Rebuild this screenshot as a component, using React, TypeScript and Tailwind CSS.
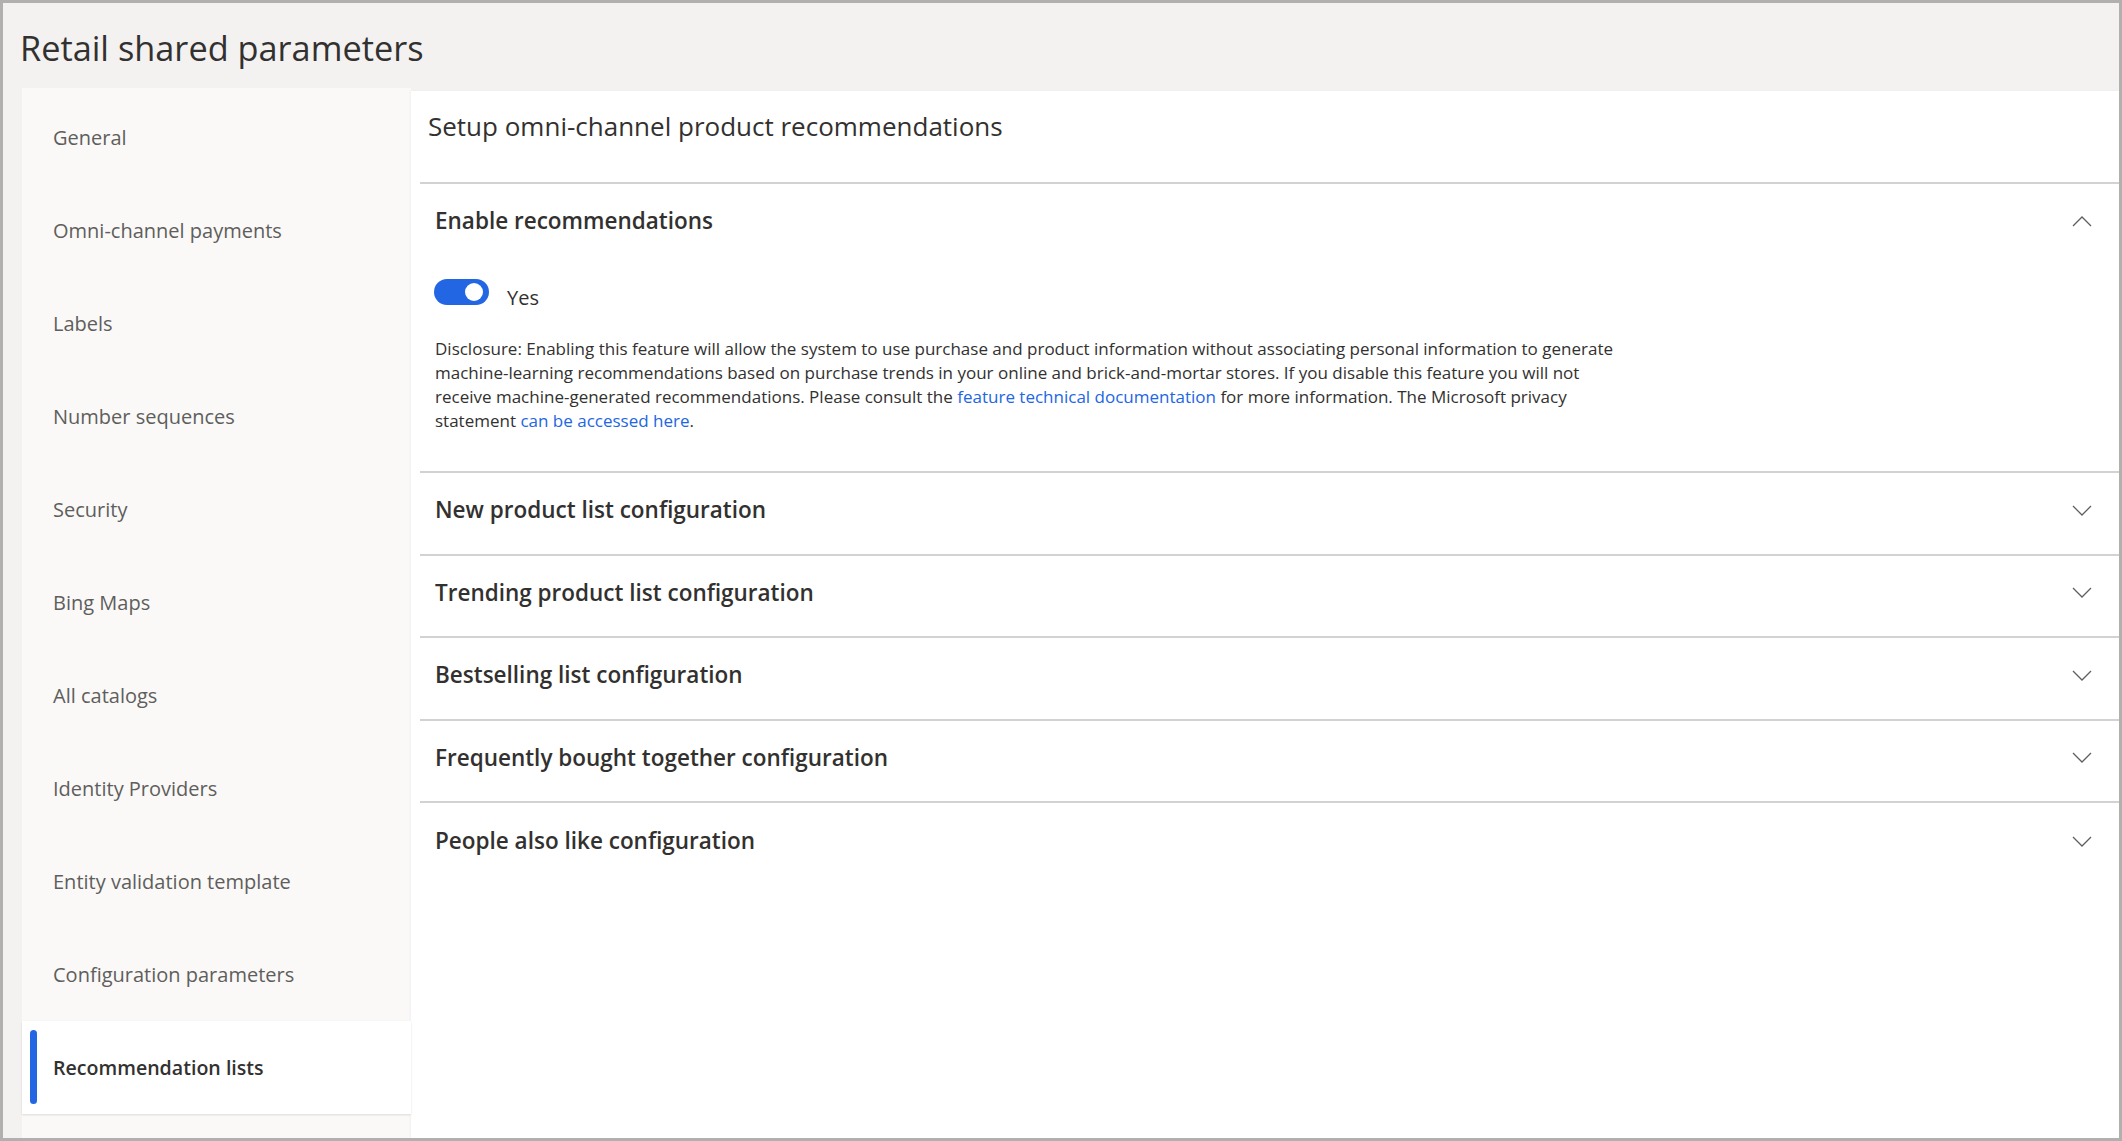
import React from 'react';

const navItems = [
    'General',
    'Omni-channel payments',
    'Labels',
    'Number sequences',
    'Security',
    'Bing Maps',
    'All catalogs',
    'Identity Providers',
    'Entity validation template',
    'Configuration parameters',
    'Recommendation lists',
];

const sections = [
    'New product list configuration',
    'Trending product list configuration',
    'Bestselling list configuration',
    'Frequently bought together configuration',
    'People also like configuration',
];

const Chevron: React.FC<{ up?: boolean }> = ({ up }) => (
    <svg width="20" height="11" viewBox="0 0 20 11" fill="none" className="shrink-0">
        <path
            d={up ? 'M1 10 L10 1 L19 10' : 'M1 1 L10 10 L19 1'}
            stroke="#605e5c"
            strokeWidth="1.3"
        />
    </svg>
);

const App: React.FC = () => {
    const active = 'Recommendation lists';

    return (
        <div className="w-[2122px] h-[1141px] border-[3px] border-[#b1b0ae] bg-[#f3f2f1] flex flex-col font-['Open_Sans',sans-serif] text-[#323130] overflow-hidden">
            {/* Page title */}
            <div className="h-[85px] shrink-0 pl-[17px] pt-[22px]">
                <h1 className="text-[34.3px] leading-[46px] font-normal text-[#323130]">Retail shared parameters</h1>
            </div>

            <div className="flex flex-1 ml-[19px] min-h-0">
                {/* Side navigation */}
                <nav className="w-[389px] shrink-0 bg-[#faf9f8] pt-[3px]">
                    {navItems.map((item) => {
                        const selected = item === active;
                        return (
                            <div
                                key={item}
                                className={`relative h-[93px] flex items-center pl-[31px] ${selected
                                    ? 'bg-white text-[19.6px] font-semibold text-[#323130] shadow-[0_1px_2px_rgba(0,0,0,0.12)]'
                                    : 'text-[20px] text-[#605e5c]'
                                    }`}
                            >
                                {selected && (
                                    <span className="absolute left-[8px] top-[9px] bottom-[10px] w-[7px] rounded-full bg-[#2266e3]" />
                                )}
                                {item}
                            </div>
                        );
                    })}
                </nav>

                {/* Main panel */}
                <main className="flex-1 bg-white mt-[3px] pl-[9px] shadow-[-1px_0_2px_rgba(0,0,0,0.04)]">
                    <div className="h-[93px] border-b-2 border-[#d4d2d0] pl-[8px] pt-[17px]">
                        <h2 className="text-[26px] leading-[36px] font-normal">Setup omni-channel product recommendations</h2>
                    </div>

                    {/* Enable recommendations */}
                    <section className="border-b-2 border-[#d4d2d0] pb-[38px]">
                        <div className="h-[74px] flex items-center justify-between pl-[15px] pr-[27px]">
                            <h3 className="text-[22.5px] font-semibold">Enable recommendations</h3>
                            <Chevron up />
                        </div>
                        <div className="flex items-start pl-[14px] pt-[21px]">
                            <div className="w-[55px] h-[26px] rounded-full bg-[#2266e3] flex items-center justify-end pr-[6px]">
                                <span className="w-[18px] h-[18px] rounded-full bg-white" />
                            </div>
                            <span className="ml-[18px] mt-[5px] text-[20px] leading-[28px]">Yes</span>
                        </div>
                        <p className="mt-[25px] pl-[15px] text-[17px] leading-[24px] text-[#323130]">
                            Disclosure: Enabling this feature will allow the system to use purchase and product information without associating personal information to generate
                            <br />
                            machine-learning recommendations based on purchase trends in your online and brick-and-mortar stores. If you disable this feature you will not
                            <br />
                            receive machine-generated recommendations. Please consult the{' '}
                            <a className="text-[#2266e3]">feature technical documentation</a> for more information. The Microsoft privacy
                            <br />
                            statement <a className="text-[#2266e3]">can be accessed here</a>.
                        </p>
                    </section>

                    {sections.map((title, i) => (
                        <section
                            key={title}
                            className={`h-[82.5px] flex items-center justify-between pl-[15px] pr-[27px] pb-[6px] ${i < sections.length - 1 ? 'border-b-2 border-[#d4d2d0]' : ''
                                }`}
                        >
                            <h3 className="text-[22.5px] font-semibold">{title}</h3>
                            <Chevron />
                        </section>
                    ))}
                </main>
            </div>
        </div>
    );
};

export default App;
